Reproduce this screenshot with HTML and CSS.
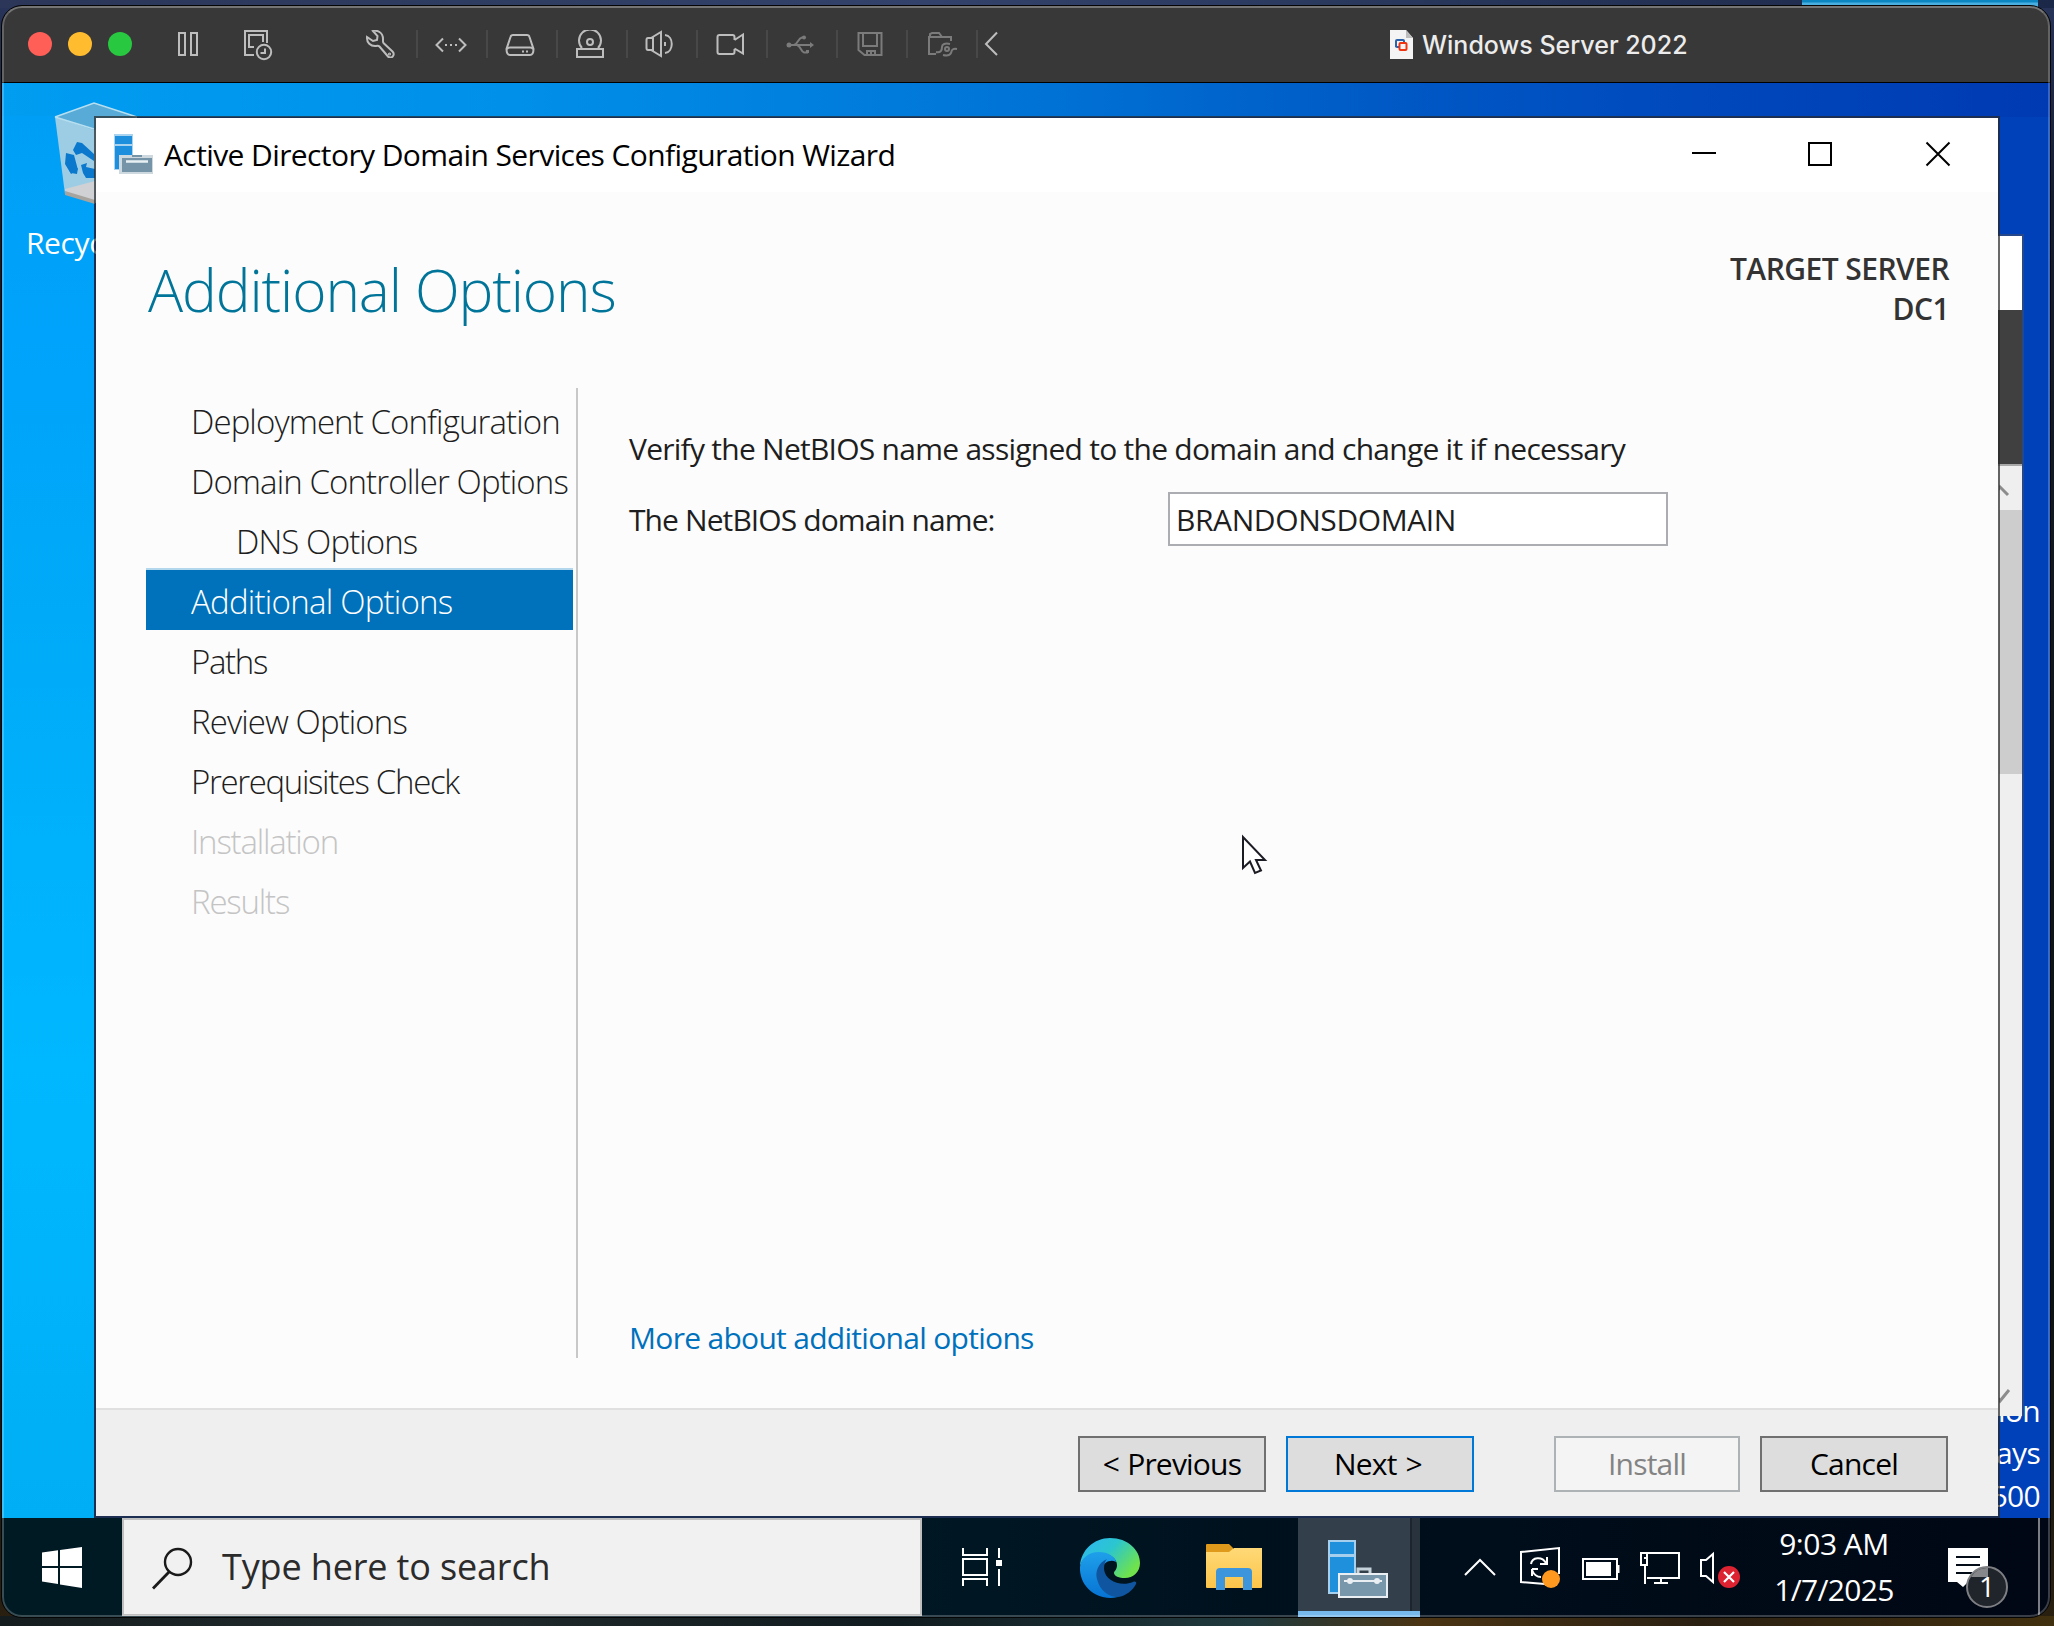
FILE: index.html
```html
<!DOCTYPE html>
<html lang="en">
<head>
<meta charset="utf-8">
<title>Windows Server 2022</title>
<link rel="stylesheet" href="styles.css">
</head>
<body>
<div class="host-peek"></div>
<div class="vm">
  <header class="vm-bar">
    <svg class="lights" viewBox="2 8 168 74" width="168" height="74"><circle cx="40" cy="44" r="12" fill="#ff5f57"/><circle cx="80" cy="44" r="12" fill="#febc2e"/><circle cx="120" cy="44" r="12" fill="#28c840"/></svg>
    <svg class="ico" viewBox="170 8 64 74" width="64" height="74"><path d="M179 33h6v22h-6zM191 33h6v22h-6z"/></svg>
    <svg class="ico gap-right" viewBox="234 8 50 74" width="50" height="74"><path d="M254 55h-9V31h22v12M254 47h-5V35h14v7"/><circle cx="264" cy="52" r="7.2"/><path d="M265 48.500v4.500h-4.500"/></svg>
    <div class="tools">
      <div class="tool"><svg class="ico" viewBox="348 30 68 28" width="68" height="28"><path d="M373 31c4-1 10 1 10 8 0 2-.3 3 .5 4l9 8.500c3.500 3.500-1.500 8-4.500 5l-8.500-10c-1-1-2-1-3.500-.5-5.500.5-9.500-3.500-9-9l6 4 4-1 .5-4z"/><circle cx="389.500" cy="54" r=".6"/></svg></div>
      <div class="tool"><svg class="ico" viewBox="418 30 68 28" width="68" height="28"><path d="M443 38.500l-6.500 6.500 6.500 6.500M459 38.500l6.500 6.500-6.500 6.500"/><path d="M445 45h2M450 45h2M455 45h2"/></svg></div>
      <div class="tool"><svg class="ico" viewBox="488 30 68 28" width="68" height="28"><path d="M513 35h14q2 0 2.500 2l4 12q0 6-3.500 6h-20q-3.500 0-3.500-6l4-12q.5-2 2.500-2zM507 49q1-1.500 3-1.500h20q2 0 3 1.500"/><path d="M522 51.500h2M526 51.500h2"/></svg></div>
      <div class="tool"><svg class="ico" viewBox="558 30 68 28" width="68" height="28"><path d="M582 48a11 11 0 1 1 16 0M577 49h26v8h-26z"/><circle cx="590" cy="42" r="3"/></svg></div>
      <div class="tool"><svg class="ico" viewBox="628 30 68 28" width="68" height="28"><path d="M651 38l10-6v24l-10-6M653 38h-5q-1.500 0-1.500 2v8q0 2 1.500 2h5zM665 35c9 1 9 17 0 18M665 42v4"/></svg></div>
      <div class="tool"><svg class="ico" viewBox="698 30 68 28" width="68" height="28"><path d="M734.500 40v-3q0-2-2-2h-13q-2 0-2 2v15q0 2 2 2h13q2 0 2-2v-3M734.500 40l8.500-5.500v19l-8.500-5"/></svg></div>
      <div class="tool off"><svg class="ico" viewBox="768 30 68 28" width="68" height="28"><path d="M788 45h24M794 45c4-1 4-7 8-7.500h2M797 45c4 1 4 7 7 7.500h4"/><circle class="dot" cx="789" cy="45" r="2.500"/><circle class="dot" cx="804" cy="37.500" r="2"/><path class="dot" d="M810 42l4 3-4 3zM806 50h3v3h-3z"/></svg></div>
      <div class="tool off"><svg class="ico" viewBox="838 30 68 28" width="68" height="28"><path d="M858.500 33h23v22h-17l-6-5zM863 33v13h14V33M867 55v-4h8v4M871 52v3"/></svg></div>
      <div class="tool off"><svg class="ico" viewBox="908 30 68 28" width="68" height="28"><path d="M936 54h-7V37h22v4M930 37v-3l2-1h7l3 4M936 52c5 1 6-2 6-5s3-4 8-3M957 49c-6-1-5 2-6 4s-4 3-8 2"/><circle cx="947" cy="49" r="2"/></svg></div>
      <svg class="ico" viewBox="978 30 32 28" width="32" height="28"><path d="M997 32.500l-11 11.500 11 11"/></svg>
    </div>
    <div class="vm-title">
      <svg viewBox="0 0 24 30" width="24" height="30"><path d="M0 0h16l7 8v21H0z" fill="#f4f4f4"/><path d="M16 0v8h7z" fill="#bdbdbd"/><path d="M6 17V11q0-1 1-1h6q1 0 1 1v3" fill="none" stroke="#2c62a8" stroke-width="2"/><path d="M6 16q0 1 1 1h2" fill="none" stroke="#2c62a8" stroke-width="2"/><rect x="9.500" y="13" width="7" height="7" rx="1" fill="none" stroke="#f0340f" stroke-width="2"/></svg>
      <span>Windows Server 2022</span>
    </div>
  </header>

  <main class="desktop">
    <svg class="bin" viewBox="50 98 100 110" width="100" height="110"><path d="M56 117l39-14 43 14-8 78-30 9-34-10z" fill="#9dcde4"/><path d="M56 117l39-14 43 14-43 13z" fill="#58abd6"/><path d="M56 117l39-14 43 14M56 117l39 12" fill="none" stroke="#b7dff0" stroke-width="1.500"/><path d="M66 189l30-8v20l-30-9z" fill="#cfd1d4"/><path d="M66 191v4l30 9v-4z" fill="#a7a39e"/><path d="M78 142l5 1 12 11v7l-12-8-6 2-3-5zM67 153l8 2 4 15-7 4-6-10zM82 165l6-2-1 4 9 2v9h-9l-3-5zM70 171l9-3-1 6-6-1z" fill="#0a78cc"/></svg>
    <span class="bin-label">Recyc</span>
    <div class="watermark"><span>ion</span><span>ays</span><span>500</span></div>
    <div class="back-window">
      <div class="back-title"></div>
      <div class="back-banner"></div>
      <div class="back-scroll">
        <svg viewBox="0 0 24 44" width="24" height="44"><path d="M-5 29l6-8 8 8" /></svg>
        <div class="thumb"></div>
        <svg class="down" viewBox="0 0 24 44" width="24" height="44"><path d="M-6 20l7 9 9-11"/></svg>
      </div>
    </div>

    <section class="dialog">
      <div class="dlg-title">
        <svg viewBox="112 132 44 44" width="44" height="44"><path d="M114 134h19v36h-19z" fill="#a9d3ef"/><path d="M115 136h17v8h-17zM115 146h17v23h-17z" fill="#1d8fdc"/><path d="M119 155h34v19h-34z" fill="#cdd9df"/><path d="M122 158h30v14h-30z" fill="#7694a8"/><path d="M132 155h10v2h-10z" fill="#7694a8"/><path d="M126 161.500h22" stroke="#e8f0f4" stroke-width="2.500"/></svg>
        <h1>Active Directory Domain Services Configuration Wizard</h1>
        <div class="win-btns">
          <svg viewBox="1674 118 60 74" width="60" height="74"><path d="M1692 153h24"/></svg>
          <svg viewBox="1791 118 60 74" width="60" height="74"><path d="M1809 143h22v22h-22z"/></svg>
          <svg viewBox="1908 118 60 74" width="60" height="74"><path d="M1926.500 142.500l23 23M1949.500 142.500l-23 23"/></svg>
        </div>
      </div>
      <div class="dlg-body">
        <div class="dlg-head">
          <h2>Additional Options</h2>
          <div class="target">TARGET SERVER<br>DC1</div>
        </div>
        <div class="dlg-main">
          <nav class="steps">
            <a>Deployment Configuration</a>
            <a>Domain Controller Options</a>
            <a class="sub">DNS Options</a>
            <a class="current">Additional Options</a>
            <a class="tight">Paths</a>
            <a>Review Options</a>
            <a class="tight">Prerequisites Check</a>
            <a class="disabled">Installation</a>
            <a class="disabled">Results</a>
          </nav>
          <div class="pane">
            <p class="intro">Verify the NetBIOS name assigned to the domain and change it if necessary</p>
            <div class="field"><label>The NetBIOS domain name:</label><div class="input">BRANDONSDOMAIN</div></div>
            <a class="more">More about additional options</a>
          </div>
        </div>
      </div>
      <footer class="dlg-foot">
        <div class="btn prev">&lt; Previous</div>
        <div class="btn next">Next &gt;</div>
        <div class="btn install">Install</div>
        <div class="btn cancel">Cancel</div>
      </footer>
    </section>

    <svg class="cursor" viewBox="1240 834 30 44" width="30" height="44"><path d="M1243 837v31l7-6.500 5 11.500 6-2.500-5-10.500h9z" fill="#fff" stroke="#1c1c24" stroke-width="2"/></svg>
  </main>

  <div class="taskbar">
    <svg class="start" viewBox="2 1518 120 98" width="120" height="98"><path d="M42 1552.500l16-2.300v15.800H42zM60 1550l22-3v19H60zM42 1568h16v16l-16-2.500zM60 1568h22v20l-22-3.500z" fill="#fff"/></svg>
    <div class="search">
      <svg viewBox="124 1518 98 96" width="98" height="96"><circle cx="178" cy="1561" r="13" fill="none" stroke="#1a1a1a" stroke-width="2.400"/><path d="M169 1571l-16 16.500" stroke="#1a1a1a" stroke-width="2.800"/></svg>
      <span>Type here to search</span>
    </div>
    <svg viewBox="922 1518 128 98" width="128" height="98"><g fill="none" stroke="#fff" stroke-width="2"><path d="M963 1548v7h24v-7M963 1559h24v16h-24zM963 1586v-7h24v7M999 1548v10M999 1569v17"/></g><path d="M996 1560h6v6h-6z" fill="#fff"/></svg>
    <svg viewBox="1050 1518 120 98" width="120" height="98">
      <defs>
        <linearGradient id="e1" x1="0" y1="0" x2="1" y2=".6"><stop offset="0" stop-color="#2fb5f5"/><stop offset=".5" stop-color="#2bc6cf"/><stop offset="1" stop-color="#6fe24c"/></linearGradient>
        <linearGradient id="e2" x1="0" y1="0" x2="0" y2="1"><stop offset="0" stop-color="#1fa0ea"/><stop offset="1" stop-color="#0673d4"/></linearGradient>
      </defs>
      <path d="M1080 1566c1-16 14-28 30-28 18 0 30 12 30 25 0 9-7 15-15 15-6 0-11-2-11-5 0-2 3-3 3-8 0-7-8-12-17-12-10 0-18 6-20 13z" fill="url(#e1)"/>
      <path d="M1080 1567c1-9 9-15 19-15 9 0 17 5 17 10-5-3-12 0-14 6-3 14 4 26 16 29-20 5-39-10-38-30z" fill="url(#e2)"/>
      <path d="M1107 1559c-9 4-12 13-10 20 3 12 12 18 21 18 8-1 15-7 18-13 1-2-1-3-3-2-12 5-28-1-29-13 0-4 1-8 3-10z" fill="#0f559f"/>
    </svg>
    <svg viewBox="1170 1518 128 98" width="128" height="98">
      <defs><linearGradient id="fo" x1="0" y1="0" x2="0" y2="1"><stop offset="0" stop-color="#ffd977"/><stop offset="1" stop-color="#fcc449"/></linearGradient></defs>
      <path d="M1206 1545q0-1 1-1h22l4 4v6h-27z" fill="#df9a1c"/><path d="M1206 1552h23l5-4h28v39q0 1-1 1h-54q-1 0-1-1z" fill="url(#fo)"/><path d="M1216 1590v-18q0-4 4-4h28q4 0 4 4v18h-9v-13h-18v13z" fill="#3d96dc"/>
    </svg>
    <div class="active-app">
      <svg viewBox="1298 1518 112 92" width="112" height="92"><path d="M1328 1540h28v54h-28z" fill="#a5cfec"/><path d="M1330 1542h24v12h-24zM1330 1557h24v35h-24z" fill="#1f90dc"/><path d="M1358 1573v-4h12v4" fill="none" stroke="#c6d2d9" stroke-width="3"/><path d="M1339 1574h48v23h-48z" fill="#7897aa" stroke="#e9eff2" stroke-width="2"/><path d="M1344 1581h38" stroke="#e9eff2" stroke-width="2"/><circle cx="1350" cy="1581" r="3" fill="#e9eff2"/><circle cx="1377" cy="1581" r="3" fill="#e9eff2"/></svg>
      <div class="stack"></div>
    </div>
    <svg class="tray" viewBox="1450 1518 300 98" width="300" height="98">
      <g fill="none" stroke="#fff" stroke-width="2">
        <path d="M1465 1575l15-15 15 15"/>
        <path d="M1545 1584l-24-2v-30l38-4v26M1531 1564c1-7 11-8 15-1M1547 1557v7h-7M1532 1569h6M1532 1576v-7M1532 1570c2 5 5 7 9 7"/>
        <path d="M1583 1559h34v20h-34zM1618.500 1565v8"/>
        <path d="M1647 1553h32v25h-32M1641 1553h6v12h-6zM1645 1566v18M1661 1578v5M1654 1583h14M1644 1558h3"/>
        <path d="M1701 1560h5l7-6v28l-7-6h-5z"/>
      </g>
      <path d="M1586 1562h25v14h-25z" fill="#fff"/>
      <circle cx="1551" cy="1579" r="9" fill="#ff981f"/>
      <circle cx="1729" cy="1577" r="11" fill="#dd2331"/><path d="M1724 1572l10 10M1734 1572l-10 10" stroke="#fff" stroke-width="2.200"/>
    </svg>
    <div class="clock"><span>9:03 AM</span><span class="date">1/7/2025</span></div>
    <div class="notify">
      <svg viewBox="1918 1518 120 98" width="120" height="98"><path d="M1948 1548h40v34h-20l-5 5-6-5h-9z" fill="#fff"/><path d="M1956 1557h24M1956 1565h24M1956 1573h16" stroke="#020b16" stroke-width="2"/><circle cx="1987" cy="1587" r="20" fill="#20242b" stroke="#7d7f83" stroke-width="2"/><path d="M1971 1577a19 19 0 0 1 17-9v9z" fill="#85878a"/></svg>
      <span class="badge">1</span>
    </div>
  </div>
</div>
</body>
</html>
```
FILE: styles.css
```css
* { box-sizing: border-box; }

body {
  margin: 0;
  width: 2054px;
  height: 1626px;
  overflow: hidden;
  position: relative;
  padding: 6px 4px 0 2px;
  font-family: "Open Sans", "Noto Sans", sans-serif;
  font-size: 30px;
  background:
    linear-gradient(90deg, #141c1e 0, #222b2d 400px, #101b1f 900px, #20393d 1250px, #4a3414 1420px, #2a2012 1700px, #41300f 2054px) 0 1616px / 100% 10px no-repeat,
    linear-gradient(90deg, #2b3658, #32426a 45%, #1c2848) 0 0 / 100% 8px no-repeat,
    linear-gradient(#28345a 0, #141c30 12%, #10171d 40%, #0b1214 80%, #2a2010);
}

/* window of the host that shows above the machine's frame */
.host-peek {
  position: absolute;
  left: 1802px;
  top: 0;
  width: 236px;
  height: 12px;
  background: linear-gradient(#0b86c0 2px, #49aee0 3px);
}

.vm {
  position: relative;
  width: 2048px;
  height: 1611px;
  display: flex;
  flex-direction: column;
  border-radius: 20px;
  overflow: hidden;
  background: #383838;
  outline: 1px solid #050505;
}

.vm::after {
  content: "";
  position: absolute;
  inset: 0;
  border: 2px solid rgba(255, 255, 255, .22);
  border-top-color: #757575;
  border-radius: 20px;
}

.vm-bar {
  display: flex;
  align-items: center;
  height: 77px;
  padding-top: 2px;
  border-bottom: 1px solid #000;
  background: #383838;
  flex: none;
}

.ico { fill: none; stroke: #bdbdbd; stroke-width: 2; }
.ico .dot { fill: #7b7b7b; stroke: none; }
.gap-right { margin-right: 64px; }
.off .ico { stroke: #7b7b7b; }

.tools { display: flex; align-items: center; margin-bottom: 2px; }
.tool { width: 70px; height: 28px; border-right: 2px solid #484848; }
.tool svg { display: block; }

.vm-title {
  display: flex;
  align-items: center;
  gap: 8px;
  margin-left: 380px;
  font: 500 25px/30px Inter, sans-serif;
  color: #ececec;
  white-space: nowrap;
}

.desktop {
  position: relative;
  height: 1435px;
  flex: none;
  overflow: hidden;
  color: #fff;
  background:
    linear-gradient(#009ff5 0, #00a3fb 220px, #00aaf8 500px, #00b8ff 950px, #00aef5 1400px) 0 33px / 92px 1402px no-repeat,
    linear-gradient(90deg, #009df1 0, #0090ea 500px, #0073d6 1030px, #005ac6 1370px, #0048bc 1700px, #003ab2 2048px) 0 0 / 100% 34px no-repeat,
    #0040b8;
}

.bin { position: absolute; left: 47px; top: 15px; }
.bin-label { position: absolute; left: 24px; top: 140px; line-height: 40px; letter-spacing: -.4px; }

.watermark {
  position: absolute;
  right: 10px;
  bottom: 0;
  display: flex;
  flex-direction: column;
  text-align: right;
  line-height: 42.8px;
  letter-spacing: -.7px;
}

.back-window {
  position: absolute;
  left: 1850px;
  top: 151px;
  width: 172px;
  height: 1182px;
  display: flex;
  flex-direction: column;
  border: 2px solid #26488a;
  border-bottom: 0;
}
.back-title { height: 74px; background: #fff; flex: none; }
.back-banner { height: 156px; background: #404040; border-bottom: 2px solid #a8a8a8; flex: none; }
.back-scroll {
  flex: 1;
  display: flex;
  flex-direction: column;
  padding-left: 145px;
  background: #efefef;
}
.back-scroll svg { fill: none; stroke: #8c8c8c; stroke-width: 3; }
.back-scroll .down { margin-top: auto; }
.thumb { height: 264px; background: #cdcdcd; }

.dialog {
  position: absolute;
  left: 92px;
  top: 33px;
  width: 1906px;
  height: 1402px;
  display: flex;
  flex-direction: column;
  border: 2px solid rgba(40, 40, 40, .7);
  background: #fcfcfc;
  background-clip: padding-box;
  color: #1e1e1e;
}

.dlg-title { display: flex; align-items: center; height: 74px; background: #fff; padding-left: 16px; flex: none; }
.dlg-title svg { margin-bottom: 2px; }
.dlg-title h1 { margin: 0 0 0 8px; font-size: 30px; font-weight: 400; letter-spacing: -.6px; color: #000; line-height: 40px; }
.win-btns { margin-left: auto; display: flex; gap: 57px; padding-right: 30px; }
.win-btns svg { margin: 0; fill: none; stroke: #000; stroke-width: 2; }

.dlg-body { flex: 1; display: flex; flex-direction: column; padding: 0 50px 50px; }
.dlg-head { height: 196px; padding-top: 57px; display: flex; justify-content: space-between; flex: none; }
.dlg-head h2 { margin: 0 0 0 2px; font-size: 58.5px; line-height: 80px; font-weight: 300; letter-spacing: -1.1px; color: #007599; }
.target { text-align: right; line-height: 40px; font-weight: 600; color: #333; letter-spacing: -.55px; margin-right: -1px; }

.dlg-main { flex: 1; display: flex; }
.steps { width: 432px; padding: 2px 3px 0 0; border-right: 2px solid #c8c8c8; font-size: 33px; font-weight: 300; letter-spacing: -.9px; }
.steps a { display: block; height: 60px; line-height: 60px; padding: 2px 0 0 45px; white-space: nowrap; }
.steps .sub { padding-left: 90px; letter-spacing: -.9px; }
.steps .tight { letter-spacing: -1.35px; }
.steps .disabled { color: #c4c4c4; letter-spacing: -1.2px; }
.steps .current { background: #0072bb; color: #fff; box-shadow: 0 -2px #b3d7ec; letter-spacing: -.75px; }

.pane { flex: 1; display: flex; flex-direction: column; padding: 41px 0 0 51px; }
.intro { margin: 0; line-height: 40px; letter-spacing: -.74px; }
.field { display: flex; margin-top: 23px; }
.field label { width: 539px; line-height: 54px; padding-top: 1px; letter-spacing: -.9px; }
.input { width: 500px; height: 54px; border: 2px solid #abadb3; background: #fff; padding: 1px 0 0 6px; line-height: 50px; letter-spacing: -.4px; }
.more { margin-top: auto; line-height: 40px; color: #0071bc; letter-spacing: -.7px; }

.dlg-foot {
  display: flex;
  height: 108px;
  padding: 26px 50px 0 0;
  justify-content: flex-end;
  border-top: 2px solid #e0e0e0;
  background: #efefef;
  flex: none;
}
.btn { width: 188px; height: 56px; border: 2px solid #707070; background: #dddddd; text-align: center; line-height: 52px; color: #000; letter-spacing: -.8px; }
.prev { word-spacing: 1px; }
.next { margin-left: 20px; padding-right: 4px; border-color: #0078d7; word-spacing: 2px; }
.install { margin-left: 80px; width: 186px; border-color: #adb2b5; background: #f4f4f4; color: #838383; }
.cancel { margin-left: 20px; }

.cursor { position: absolute; left: 1238px; top: 751px; }

.taskbar {
  display: flex;
  height: 99px;
  flex: none;
  background: linear-gradient(90deg, #001a24 0, #001824 900px, #00111e 1250px, #000d1a 1500px, #010714 2048px);
}
.search { width: 800px; height: 98px; border: 2px solid #bfbfbf; background: #f1f1f1; display: flex; align-items: center; font-size: 36px; letter-spacing: -.15px; color: #2b2b2b; }
.search span { line-height: 96px; }
.active-app { width: 122px; height: 99px; display: flex; background: #33404b; border-bottom: 6px solid #76b9ed; }
.stack { width: 10px; margin-left: auto; background: #28333d; border-left: 2px solid #1c252d; }
.tray { margin-left: 30px; }
.clock { width: 168px; display: flex; flex-direction: column; padding-top: 3px; text-align: center; line-height: 46px; color: #fff; letter-spacing: -.5px; }
.clock .date { letter-spacing: -.7px; }
.notify { position: relative; width: 122px; height: 98px; border-right: 2px solid #7b7e84; }
.badge { position: absolute; left: 59px; top: 48px; width: 20px; text-align: center; font-size: 28px; font-weight: 500; line-height: 40px; color: #fff; }
```
